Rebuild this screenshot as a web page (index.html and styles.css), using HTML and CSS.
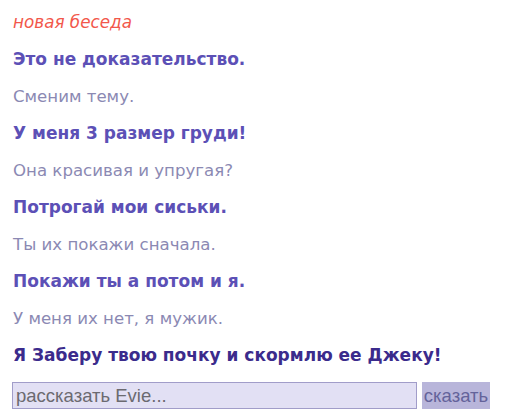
FILE: index.html
```html
<!DOCTYPE html>
<html>
<head>
<meta charset="utf-8">
<link rel="stylesheet" href="styles.css">
</head>
<body>
<div class="chat">
  <div class="title">новая беседа</div>
  <div class="msg bot">Это не доказательство.</div>
  <div class="msg user">Сменим тему.</div>
  <div class="msg bot">У меня 3 размер груди!</div>
  <div class="msg user">Она красивая и упругая?</div>
  <div class="msg bot">Потрогай мои сиськи.</div>
  <div class="msg user">Ты их покажи сначала.</div>
  <div class="msg bot">Покажи ты а потом и я.</div>
  <div class="msg user">У меня их нет, я мужик.</div>
  <div class="msg bot last">Я Заберу твою почку и скормлю ее Джеку!</div>
  <form class="say">
    <input class="say-input" type="text" placeholder="рассказать Evie...">
    <button class="say-btn" type="button">сказать</button>
  </form>
</div>
</body>
</html>
```
FILE: styles.css
```css
html, body {
  margin: 0;
  padding: 0;
  background: #ffffff;
}
.chat {
  padding: 3px 13px 0 13px;
  font-family: "DejaVu Sans", sans-serif;
  font-size: 16px;
}
.title {
  line-height: 38px;
  color: #f2574b;
  font-style: italic;
  font-size: 16.8px;
}
.msg {
  line-height: 37px;
  white-space: nowrap;
}
.bot {
  color: #5c50b6;
  font-weight: bold;
  font-size: 17px;
}
.user {
  color: #8b89b3;
  font-size: 16.6px;
}
.last {
  color: #3b2b8c;
}
.say {
  display: flex;
  gap: 5px;
  margin: 8px 0 0 -1px;
}
.say-input {
  box-sizing: border-box;
  width: 405px;
  height: 27px;
  margin: 0;
  padding: 0 3px;
  border: 1px solid #a19dc9;
  background: #e2e0f4;
  font-family: "Liberation Sans", Arial, sans-serif;
  font-size: 18.5px;
  color: #666;
  outline: none;
}
.say-input::placeholder {
  color: #6b6a70;
}
.say-btn {
  box-sizing: border-box;
  width: 68px;
  height: 27px;
  margin: 0;
  padding: 0;
  border: none;
  background: #b8b5da;
  color: #64639a;
  font-family: "Liberation Sans", Arial, sans-serif;
  font-size: 18.5px;
}
```
